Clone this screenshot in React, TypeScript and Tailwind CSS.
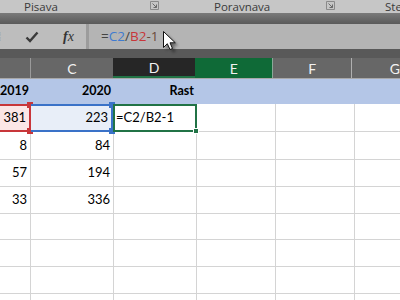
import React from "react";

const cellFont = { fontFamily: "Lato, 'Open Sans', sans-serif" };

function Check() {
  return (
    <svg width="14" height="12" viewBox="0 0 14 12">
      <path d="M1.5 6.5 L5 10 L12.5 1.5" fill="none" stroke="#3a3a3a" strokeWidth="2.4" />
    </svg>
  );
}

function Launcher() {
  return (
    <svg width="9" height="9" viewBox="0 0 9 9">
      <path d="M0.5 0.5 H8.5 V8.5 H0.5 Z" fill="none" stroke="#8a8a8a" strokeWidth="1" />
      <path d="M2.5 2.5 L6.5 6.5 M6.5 3.5 V6.5 H3.5" fill="none" stroke="#6a6a6a" strokeWidth="1" />
    </svg>
  );
}

function Cursor() {
  return (
    <svg width="22" height="26" viewBox="0 0 22 26" className="absolute left-[161px] top-[30px]">
      <defs>
        <filter id="sh" x="-50%" y="-50%" width="200%" height="200%">
          <feGaussianBlur stdDeviation="1.6" />
        </filter>
      </defs>
      <path d="M4 3 L4 19 L7.8 15.2 L10.5 21 L13 20 L10.5 14.3 L15.8 14.3 Z" fill="#000" opacity="0.45" filter="url(#sh)" transform="translate(1.5 1.5)" />
      <path d="M2.5 1.5 L2.5 17.5 L6.3 13.7 L9 19.5 L11.5 18.5 L9 12.8 L14.3 12.8 Z" fill="#fff" stroke="#111" strokeWidth="1" />
    </svg>
  );
}

const widths = ["w-[31px]", "w-[83px]", "w-[83px]", "w-[79px]", "w-[79px]", "flex-1"];

type Row = { h: string; cells: string[] };

const rows: Row[] = [
  { h: "h-[28px]", cells: ["8", "84", "", "", "", ""] },
  { h: "h-[27px]", cells: ["57", "194", "", "", "", ""] },
  { h: "h-[27px]", cells: ["33", "336", "", "", "", ""] },
  { h: "h-[26px]", cells: ["", "", "", "", "", ""] },
  { h: "h-[27px]", cells: ["", "", "", "", "", ""] },
  { h: "h-[27px]", cells: ["", "", "", "", "", ""] },
  { h: "h-[27px]", cells: ["", "", "", "", "", ""] },
];

export default function App() {
  return (
    <div className="relative w-[400px] h-[300px] overflow-hidden bg-white" style={{ fontFamily: "'Open Sans', 'Noto Sans', sans-serif" }}>
      {/* ribbon labels */}
      <div className="h-[13px] bg-[#c6c6c6] flex items-start text-[11.5px] leading-[13px] text-[#3a3a3a]">
        <span className="ml-[24px] w-[126px] shrink-0">Pisava</span>
        <span className="mt-[1px] flex"><Launcher /></span>
        <span className="ml-[2px] w-[1px] h-[9px] bg-[#9a9a9a]" />
        <span className="ml-[53px] w-[112px] shrink-0">Poravnava</span>
        <span className="mt-[1px] flex"><Launcher /></span>
        <span className="ml-[2px] w-[1px] h-[9px] bg-[#9a9a9a]" />
        <span className="ml-[48px] shrink-0">Ste</span>
      </div>
      {/* dark band */}
      <div className="h-[11px] bg-gradient-to-b from-[#7a7a7a] to-[#5a5a5a]" />
      {/* formula bar */}
      <div className="h-[25px] bg-[#5a5a5a] flex">
        <div className="w-[86px] bg-[#bdbdbd] flex items-center relative">
          <span className="absolute left-[-2px] text-[#9a9a9a] text-[12px]">⁞</span>
          <span className="ml-[25px] flex"><Check /></span>
          <span className="ml-[24px] text-[14px] italic text-[#333]" style={{ fontFamily: "'Liberation Serif', serif" }}>
            <span className="font-bold">f</span>x
          </span>
        </div>
        <div className="w-[3px] bg-[#9c9c9c]" />
        <div className="flex-1 bg-[#b4b4b4] flex items-center pl-[12px] text-[13.5px]" style={{ fontFamily: "'Open Sans', sans-serif" }}>
          <span className="text-[#444]">=</span>
          <span className="text-[#3f7bd0]">C2</span>
          <span className="text-[#444]">/</span>
          <span className="text-[#c8363a]">B2</span>
          <span className="text-[#6b4a3a]">-1</span>
        </div>
      </div>
      {/* dark gap */}
      <div className="h-[9px] bg-[#595959]" />
      {/* column headers */}
      <div className="h-[21px] flex bg-[#676767] border-b border-[#a8a8a8] text-[14px] text-[#f2f2f2]" style={cellFont}>
        <div className={`${widths[0]} border-r border-[#9a9a9a]`} />
        <div className={`${widths[1]} flex items-center justify-center`}>C</div>
        <div className={`${widths[2]} flex items-center justify-center bg-[#262626] border-b-2 border-[#217346]`}>D</div>
        <div className={`${widths[3]} flex items-center justify-center bg-[#0f6a37] border-r border-[#8aa898]`}>E</div>
        <div className={`${widths[4]} flex items-center justify-center border-r border-[#b0b0b0]`}>F</div>
        <div className={`${widths[5]} flex items-center pl-[38px]`}>G</div>
      </div>
      {/* row 1 */}
      <div className="h-[25px] flex bg-[#b4c6e7] text-[12.5px] font-bold text-black" style={cellFont}>
        <div className={`${widths[0]} flex items-center justify-end pr-[2px]`}>2019</div>
        <div className={`${widths[1]} flex items-center justify-end pr-[3px]`}>2020</div>
        <div className={`${widths[2]} flex items-center justify-end pr-[3px]`}>Rast</div>
        <div className={widths[3]} />
        <div className={widths[4]} />
        <div className={widths[5]} />
      </div>
      {/* row 2 */}
      <div className="h-[28px] flex text-[13px] text-black relative" style={cellFont}>
        <div className={`${widths[0]} relative bg-[#fbe6e6] border-2 border-[#c8363a] border-l-0 flex items-center justify-end pr-[3px]`}>
          381
          <span className="absolute right-[-4px] top-[-4px] w-[6px] h-[6px] bg-[#c8363a]" />
          <span className="absolute right-[-4px] bottom-[-4px] w-[6px] h-[6px] bg-[#c8363a]" />
        </div>
        <div className={`w-[82px] relative bg-[#e8eef8] border-y-2 border-r-2 border-[#3a72c8] flex items-center justify-end pr-[3px]`}>
          223
          <span className="absolute right-[-4px] top-[-4px] w-[6px] h-[6px] bg-[#3a72c8]" />
          <span className="absolute right-[-4px] bottom-[-4px] w-[6px] h-[6px] bg-[#3a72c8]" />
        </div>
        <div className={`w-[84px] relative bg-white border-2 border-[#217346] flex items-center pl-[1px]`}>
          =C2/B2-1
          <span className="absolute right-[-4px] bottom-[-4px] w-[6px] h-[6px] bg-[#217346] border border-white" />
        </div>
        <div className={`w-[79px] border-r border-b border-[#d4d4d4]`} />
        <div className={`${widths[4]} border-r border-b border-[#d4d4d4]`} />
        <div className={`${widths[5]} border-b border-[#d4d4d4]`} />
      </div>
      {rows.map((r, i) => (
        <div key={i} className={`${r.h} flex text-[13px] text-black`} style={cellFont}>
          {r.cells.map((c, j) => (
            <div
              key={j}
              className={`${widths[j]} ${j < 5 ? "border-r" : ""} border-b border-[#d4d4d4] flex items-center justify-end pr-[3px]`}
            >
              {c}
            </div>
          ))}
        </div>
      ))}
      <Cursor />
    </div>
  );
}
